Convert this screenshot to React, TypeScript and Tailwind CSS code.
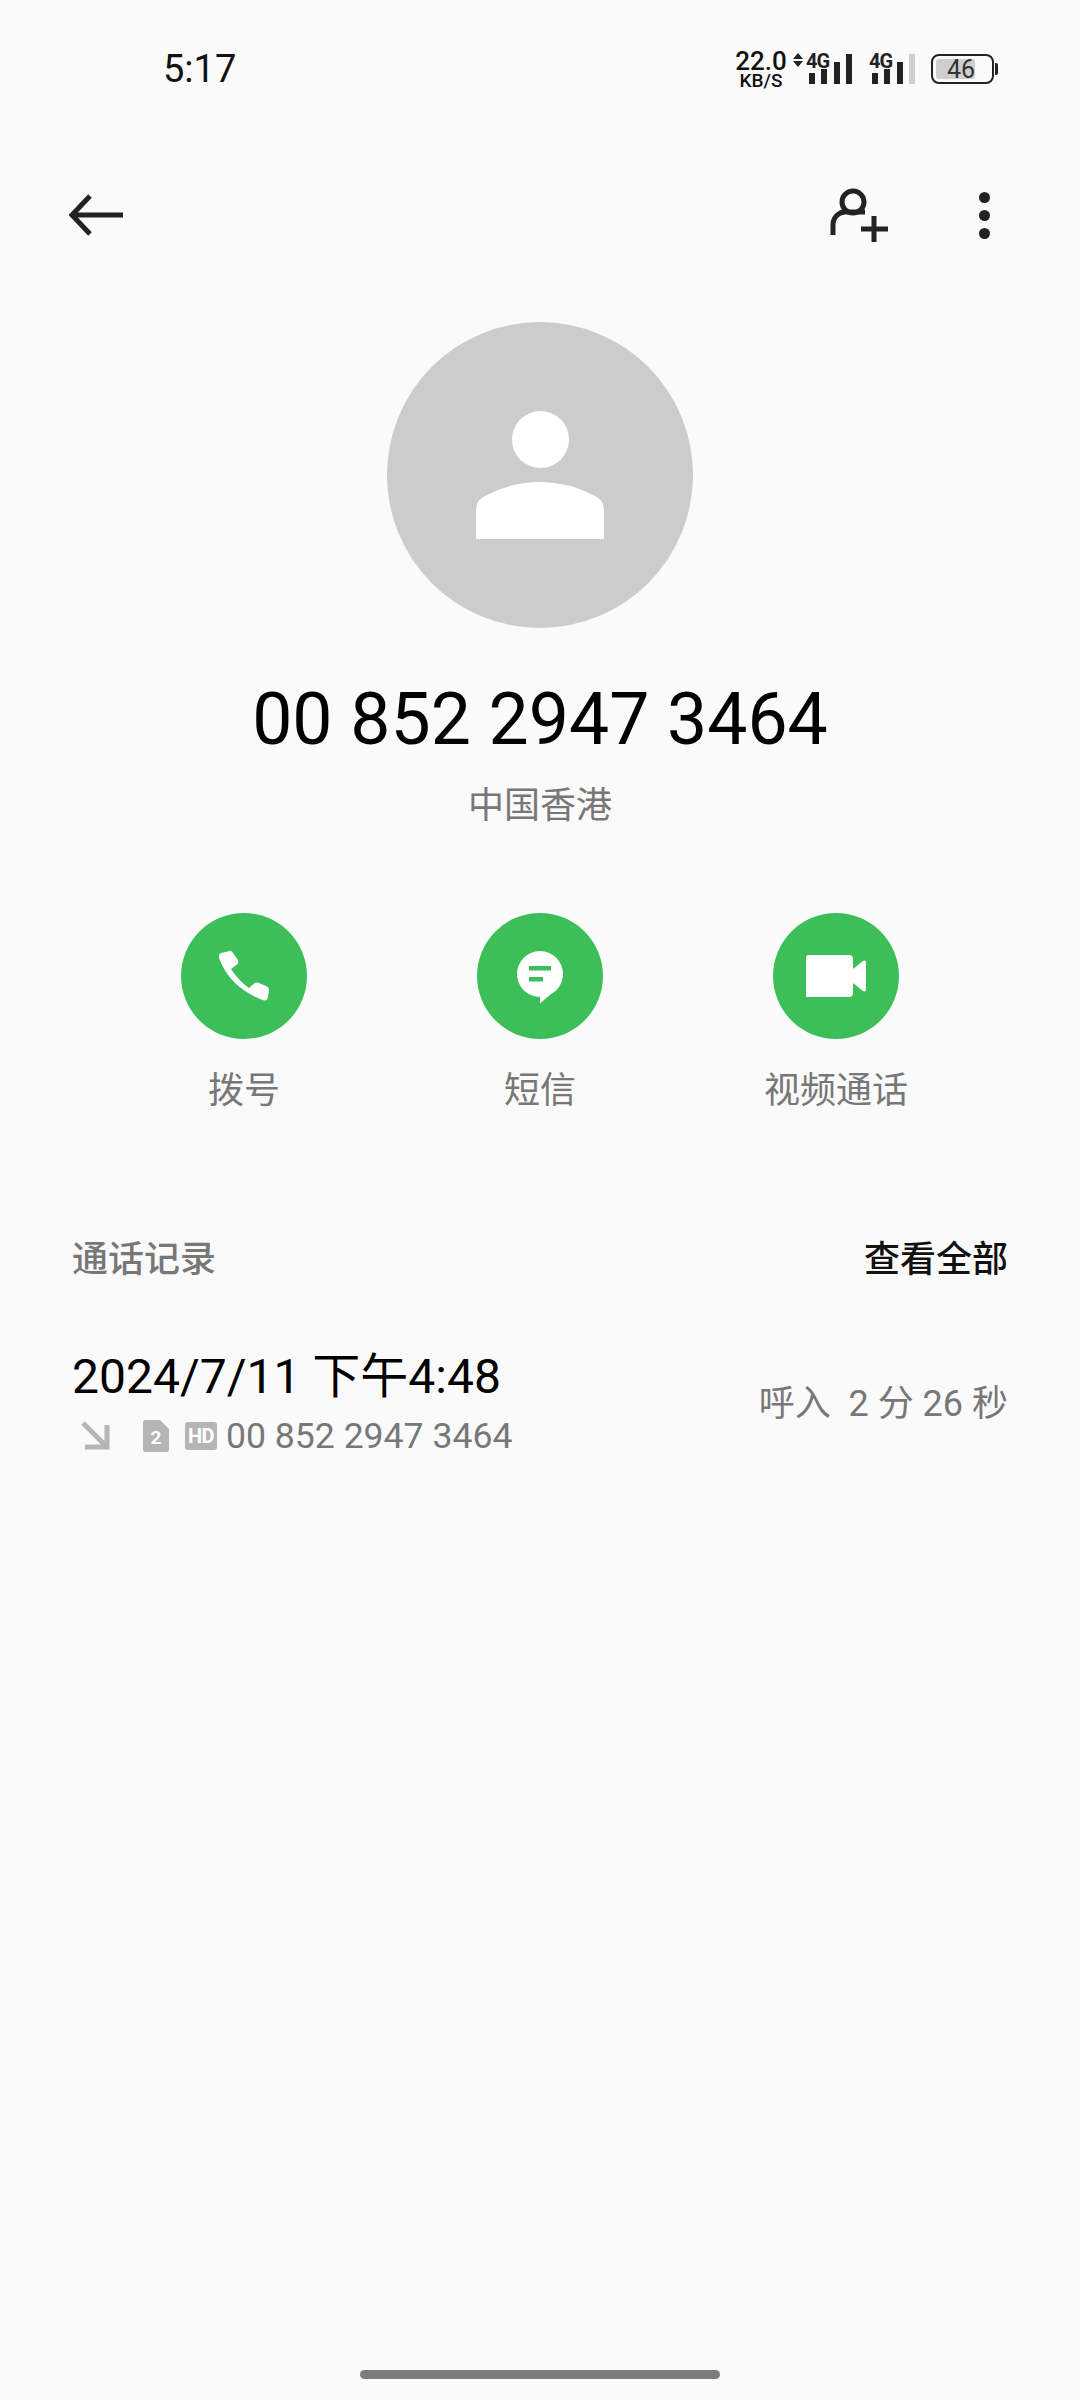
const sans = "font-['Roboto','Noto_Sans_CJK_SC',sans-serif]";

function PhoneIcon() {
  return (
    <svg width="80" height="80" viewBox="0 0 80 80">
      <path
        fill="#fff"
        d="M17 17L26 15Q28 14.500 29 17L34 24Q35 27 33 28.500L27 33Q34 44 45 52L50 47.500Q52 46 55 47L62 50Q65 51 65 54L64 61Q63.500 65 60 64.500Q44 59 31 47Q20 36 15 22Q14.500 18 17 17Z"
      />
    </svg>
  );
}

function MessageIcon() {
  return (
    <svg width="80" height="80" viewBox="0 0 80 80">
      <circle cx="40" cy="38" r="23" fill="#fff" />
      <path d="M40 58v9.500L51 58z" fill="#fff" />
      <rect x="29" y="30" width="22" height="4.500" fill="#3cbf58" />
      <rect x="29" y="41" width="14" height="4.500" fill="#3cbf58" />
    </svg>
  );
}

function VideoIcon() {
  return (
    <svg width="80" height="80" viewBox="0 0 80 80">
      <path
        fill="#fff"
        d="M13 19H53a4 4 0 014 4v10l10-8q3-1.500 3 2v26q0 3.500-3 2l-10-8v10a4 4 0 01-4 4H10V22a3 3 0 013-3z"
      />
    </svg>
  );
}

function Signal({ last }: { last: string }) {
  return (
    <div className="relative flex items-end gap-[6.4px] w-[43px] h-[30px]">
      <div className="w-[6px] h-[11px] bg-[#222]" />
      <div className="w-[6px] h-[15px] bg-[#222]" />
      <div className="w-[6px] h-[22px] bg-[#222]" />
      <div className={"w-[6px] h-[30px] " + last} />
      <span className="absolute top-[-2px] left-[-3px] text-[20px] leading-[18px] font-bold tracking-[-1px] text-[#222]">4G</span>
    </div>
  );
}

function StatusBar() {
  return (
    <div className="flex items-center justify-between h-[60px] mt-[39px] pl-[163px] pr-[82px]">
      <span className="text-[38px] leading-[40px] text-[#111]">5:17</span>
      <div className="flex items-center">
        <div className="flex flex-col items-center w-[50px] text-[#111]">
          <span className="text-[26px] leading-[23px] font-medium">22.0</span>
          <span className="text-[19px] leading-[15px] font-medium">KB/S</span>
        </div>
        <svg width="10" height="14" viewBox="0 0 10 14" className="ml-[7px] mb-[18px]">
          <path d="M5 0l5 6H0zM5 14l5-6H0z" fill="#222" />
        </svg>
        <div className="ml-[6px]">
          <Signal last="bg-[#222]" />
        </div>
        <div className="ml-[20px]">
          <Signal last="bg-[#cfcfcf]" />
        </div>
        <div className="flex items-center ml-[16px]">
          <div className="flex items-center w-[63px] h-[30px] rounded-[8px] border-[2px] border-[#222] p-[3px]">
            <div className="w-[39px] h-full rounded-[3px] bg-[#cfcfcf] flex items-center">
              <span className="text-[25px] leading-none text-[#333] pl-[11px]">46</span>
            </div>
          </div>
          <div className="w-[3px] h-[12px] ml-[1px] rounded-r-[2px] bg-[#222]" />
        </div>
      </div>
    </div>
  );
}

function Action({ label, icon }: { label: string; icon: React.ReactNode }) {
  return (
    <div className="flex flex-col items-center w-[180px]">
      <div className="flex items-center justify-center w-[126px] h-[126px] rounded-full bg-[#3cbf58]">
        {icon}
      </div>
      <span className="mt-[28px] text-[36px] leading-[48px] text-[#777]">{label}</span>
    </div>
  );
}

export default function App() {
  return (
    <div className={"relative flex flex-col w-[1080px] h-[2400px] bg-[#fafafa] " + sans}>
      <StatusBar />

      <div className="flex items-center justify-between h-[60px] mt-[86px] pl-[69px] pr-[90px]">
        <svg width="54" height="42" viewBox="0 0 54 42" fill="none" stroke="#222" strokeWidth="5">
          <path d="M54 21H3M21 2L3 21l18 19" />
        </svg>
        <div className="flex items-center gap-[89px]">
          <svg width="60" height="56" viewBox="0 0 60 56" fill="none" stroke="#222" strokeWidth="5">
            <circle cx="23" cy="15" r="11" />
            <path d="M3 48V38c0-8 6-13 12-13h20" />
            <path d="M44 29v26M31 42h27" />
          </svg>
          <div className="flex flex-col gap-[7px]">
            <div className="w-[11px] h-[11px] rounded-full bg-[#222]" />
            <div className="w-[11px] h-[11px] rounded-full bg-[#222]" />
            <div className="w-[11px] h-[11px] rounded-full bg-[#222]" />
          </div>
        </div>
      </div>

      <div className="flex flex-col items-center">
        <div className="flex flex-col items-center justify-center w-[306px] h-[306px] mt-[77px] rounded-full bg-[#cccccc]">
          <div className="w-[57px] h-[57px] rounded-full bg-white" />
          <svg width="128" height="57" viewBox="0 0 128 57" className="mt-[14px]">
            <path fill="#fff" d="M0 57V28Q0 18 9 14Q35 0 64 0Q93 0 119 14Q128 18 128 28V57Z" />
          </svg>
        </div>
        <div className="mt-[49px] text-[71.500px] leading-[86px] text-black">00 852 2947 3464</div>
        <div className="mt-[19px] text-[36px] leading-[48px] text-[#777]">中国香港</div>
      </div>

      <div className="flex justify-center gap-[116px] mt-[83px]">
        <Action label="拨号" icon={<PhoneIcon />} />
        <Action label="短信" icon={<MessageIcon />} />
        <Action label="视频通话" icon={<VideoIcon />} />
      </div>

      <div className="flex items-center justify-between px-[72px] mt-[121px]">
        <span className="text-[36px] leading-[48px] font-medium text-[#777]">通话记录</span>
        <span className="text-[36px] leading-[48px] font-medium text-[#111]">查看全部</span>
      </div>

      <div className="flex items-center justify-between px-[72px] mt-[61px]">
        <div className="flex flex-col">
          <span className="text-[48px] leading-[64px] text-black">2024/7/11 下午4:48</span>
          <div className="flex items-center h-[40px] mt-[7px]">
            <svg width="30" height="30" viewBox="0 0 30 30" className="ml-[9px]" fill="none" stroke="#b5b5b5" strokeWidth="5">
              <path d="M2 2l25 25M26 4v22H4" />
            </svg>
            <svg width="26" height="32" viewBox="0 0 26 32" className="ml-[32px]">
              <path fill="#b5b5b5" d="M2 0h15l9 9v21c0 1-1 2-2 2H2c-1 0-2-1-2-2V2c0-1 1-2 2-2z" />
              <text x="13" y="24" textAnchor="middle" fontSize="19" fontWeight="700" fill="#fff">2</text>
            </svg>
            <span className="flex items-center justify-center ml-[16px] w-[32px] h-[28px] rounded-[3px] bg-[#b5b5b5] text-[20px] leading-none font-bold tracking-[-0.5px] text-white">HD</span>
            <span className="ml-[9px] text-[35.600px] leading-[40px] text-[#777]">00 852 2947 3464</span>
          </div>
        </div>
        <span className="mt-[6px] text-[36px] leading-[40px] text-[#777] whitespace-pre">呼入  2 分 26 秒</span>
      </div>

      <div className="absolute bottom-[21px] left-[360px] w-[360px] h-[9px] rounded-full bg-[#7b7b7b]" />
    </div>
  );
}
